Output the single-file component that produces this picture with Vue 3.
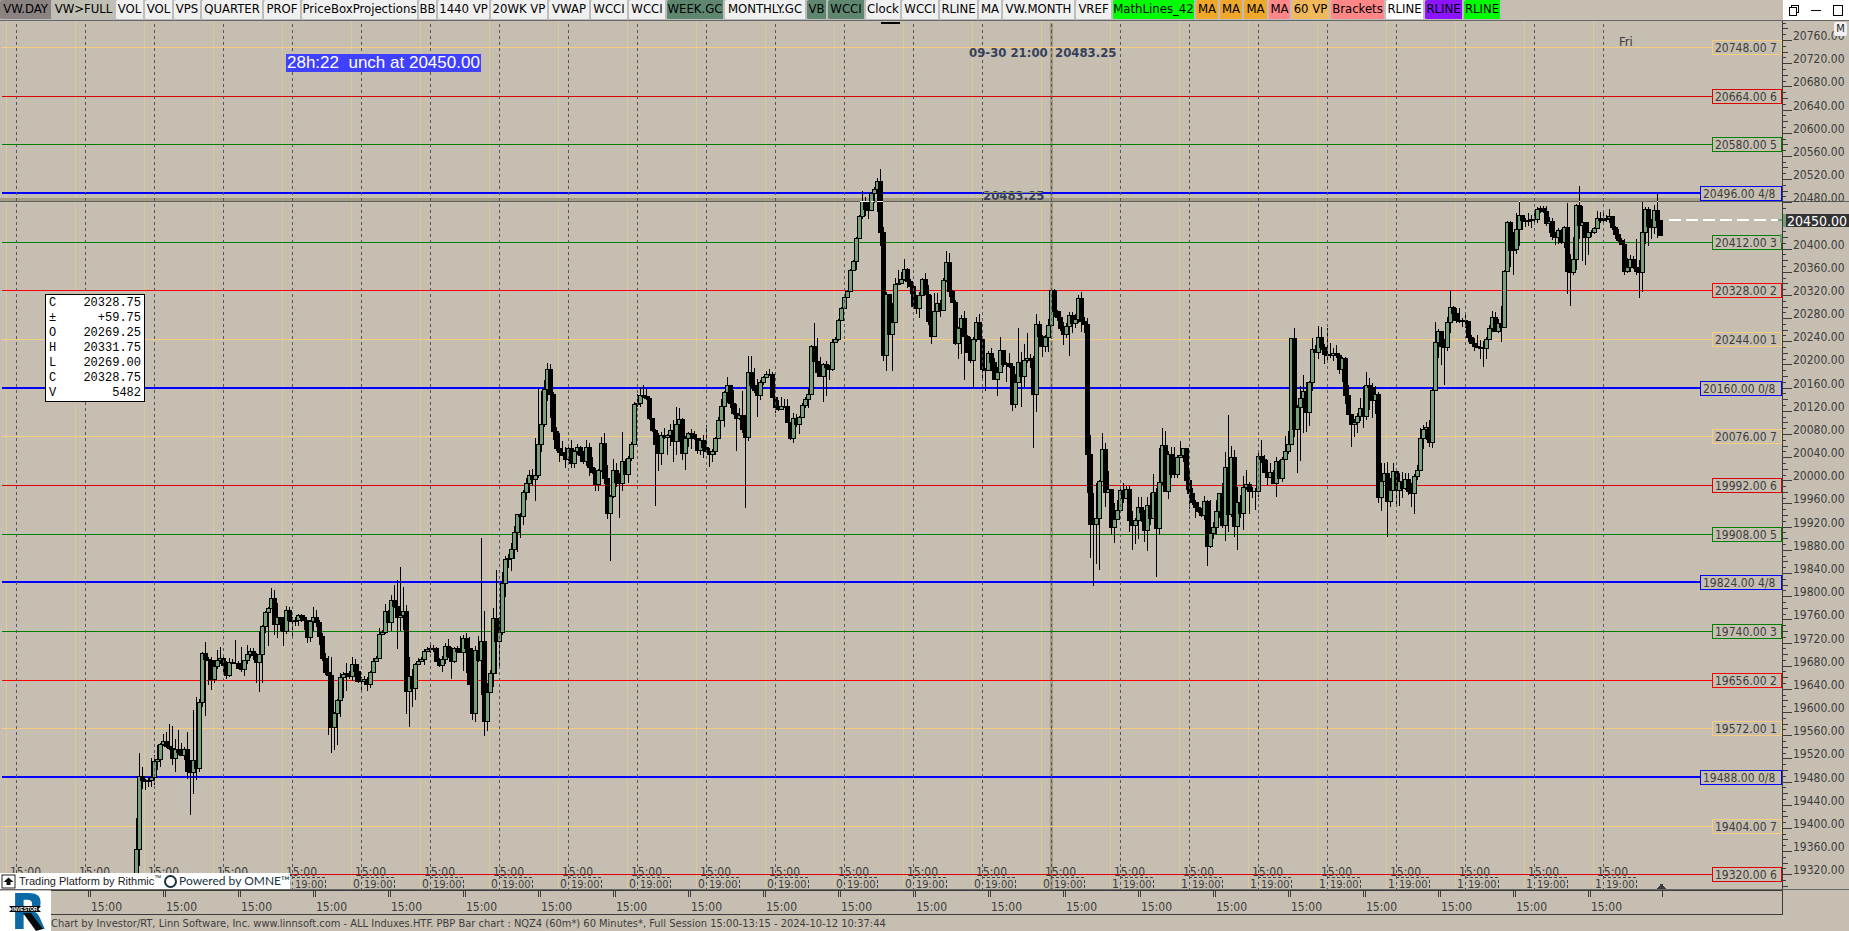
<template>
  <div class="workspace">
    <header class="toolbar">
      <nav class="tabs">
        <button
          v-for="(tab, index) in tabs"
          :key="index"
          class="tab"
          :class="tab[2]"
          :style="{ width: tab[1] + 'px' }">
          {{ tab[0] }}
        </button>
      </nav>
      <div class="window-controls">
        <button class="win-btn" aria-label="Restore">
          <svg width="12" height="12" viewBox="0 0 12 12"><path d="M3.5 3V1.5h7v7H9M1.5 3.5h7v8h-7z" /></svg>
        </button>
        <button class="win-btn" aria-label="Minimize">
          <svg width="12" height="12" viewBox="0 0 12 12"><path d="M1 6.500h10" /></svg>
        </button>
        <button class="win-btn" aria-label="Maximize">
          <svg width="12" height="12" viewBox="0 0 12 12"><path d="M1.500 1.500h9v10h-9z" /></svg>
        </button>
      </div>
    </header>

    <main class="chart">
      <svg class="plot" viewBox="0 21 1849 868">
        <!-- session grid -->
        <rect v-for="x in sessions" :key="'y' + x" class="day-line" :x="x - 10" y="21" width="1" height="868" />

        <!-- crosshair bands -->
        <rect class="cross-band" x="1050" y="23" width="3" height="866" />
        <rect class="cross-band" x="0" y="198" width="1782" height="3" />

        <!-- price levels -->
        <rect
          v-for="lv in levels"
          :key="'l' + lv.price"
          :fill="lv.color"
          x="2"
          :y="lv.thick ? lv.y - 1 : lv.y"
          width="1780"
          :height="lv.thick ? 2 : 1" />

        <!-- bars -->
        <g v-for="bar in bars" :key="bar.x">
          <rect :x="bar.x" :y="bar.high" width="1" :height="bar.low - bar.high" />
          <rect :x="bar.x - 2" :y="bar.top" width="5" :height="bar.size" />
          <rect v-if="bar.up && bar.size > 2" class="up" :x="bar.x - 1" :y="bar.top + 1" width="3" :height="bar.size - 2" />
        </g>

        <line v-for="x in sessions" :key="'d' + x" class="session" :x1="x + 0.5" y1="24" :x2="x + 0.5" y2="889" />
        <rect class="cross-line" x="0" y="201" width="1849" height="1" />
        <rect v-for="m in marks" :key="m[0]" fill="#fff" :x="m[0]" y="201" :width="m[1]" height="1" />
        <rect x="881" y="22" width="19" height="2" rx="1" />

        <!-- last price -->
        <line class="last-line" x1="1669" y1="220" x2="1778" y2="220" />
        <rect class="up" x="1778" y="219" width="4" height="2" />

        <!-- level labels -->
        <g v-for="lv in levels" :key="'b' + lv.price">
          <rect
            class="level-box"
            :stroke="lv.color"
            :x="lv.thick ? 1700.5 : 1712.5"
            :y="lv.y - 6.5"
            :width="lv.thick ? 81 : 69"
            height="14" />
          <text :x="lv.thick ? 1703 : 1715" :y="lv.y + 5">{{ lv.price }}.00 {{ lv.mark }}</text>
        </g>
        <rect class="up" x="1780" y="234" width="2" height="9" />

        <!-- session times -->
        <g v-for="(x, i) in sessions" :key="'t' + x">
          <text :x="x - 6" y="876">15:00</text>
          <text :x="x - 8" y="888">{{ i > 15 ? 1 : 0 }}</text>
          <text class="small" :x="x + 3" y="888">19:00</text>
          <path class="time-box" :d="`M${x} 877.5h33v11`" />
        </g>
        <path d="M1657 889v-1l3-2v-2h3v2l3 2v1z" fill="#3c3c3c" />

        <!-- price axis -->
        <rect class="ink" x="1782" y="21" width="1" height="868" />
        <rect v-for="t in ticks" :key="'k' + t.price" class="ink" x="1783" :y="t.y" :width="t.len" height="1" />
        <text v-for="t in axisLabels" :key="'a' + t.price" x="1793" :y="t.y">{{ t.price }}.00</text>
        <rect class="up" x="1783" y="214" width="3" height="13" />
        <rect fill="#333" x="1786" y="214" width="63" height="13" />
        <text class="last-price" x="1787" y="226">20450.00</text>

        <text class="cursor-text" x="969" y="57">09-30 21:00</text>
        <text class="cursor-text" x="1055" y="57">20483.25</text>
        <text class="cursor-text" x="983" y="200">20483.25</text>
        <rect fill="#ff0" fill-opacity="0.5" x="984" y="192" width="58" height="1" />
        <text class="day-name" x="1619" y="46">Fri</text>
      </svg>

      <div class="countdown">28h:22&nbsp; unch at 20450.00</div>

      <table class="quote">
        <tbody>
          <tr v-for="(row, index) in quote" :key="index">
            <th scope="row">{{ row[0] }}</th>
            <td>{{ row[1] }}</td>
          </tr>
        </tbody>
      </table>

      <button class="mode-btn">M</button>

      <div class="credits">
        <svg width="16" height="15" viewBox="0 0 16 15">
          <rect x="1" y="1" width="13" height="13" fill="#fff" stroke="#222" />
          <path d="M7.500 3.500l5 4.500h-3v3h-4V8h-3z" fill="#111" />
        </svg>
        <span class="rithmic">Trading Platform by Rithmic<sup>™</sup></span>
        <svg width="15" height="15" viewBox="0 0 15 15">
          <circle cx="7.500" cy="7.500" r="5.500" fill="none" stroke="#17313d" stroke-width="2" />
        </svg>
        <span class="omne">Powered by OMNE™</span>
      </div>
    </main>

    <footer class="bottom">
      <svg class="logo" viewBox="0 0 51 40">
        <text x="11" y="38">R</text>
        <path d="M23 22h8l12 16-7 2z" fill="#0a0a0a" />
        <path d="M9 15h32l-3 3 3 3H9l3-3z" fill="#000" />
        <text class="logo-band" x="12" y="20">INVESTOR</text>
      </svg>
      <div class="time-axis">
        <span v-for="n in 21" :key="n" class="time-cell">15:00</span>
        <i class="end-tick"></i>
      </div>
      <p class="caption">
        Chart by Investor/RT, Linn Software, Inc. www.linnsoft.com - ALL Induxes.HTF. PBP Bar chart : NQZ4 (60m*) 60 Minutes*, Full Session 15:00-13:15 - 2024-10-12 10:37:44
      </p>
    </footer>
  </div>
</template>

<script setup>
// label, width, colour class
const tabs = [
  ['VW.DAY', 53, 'dim'], ['VW>FULL', 63, 'soft'], ['VOL', 29, ''], ['VOL', 29, ''], ['VPS', 28, ''],
  ['QUARTER', 62, ''], ['PROF', 38, ''], ['PriceBoxProjections', 117, ''], ['BB', 19, ''],
  ['1440 VP', 53, ''], ['20WK VP', 58, ''], ['VWAP', 42, ''], ['WCCI', 38, ''], ['WCCI', 38, ''],
  ['WEEK.GC', 58, 'teal'], ['MONTHLY.GC', 82, ''], ['VB', 21, 'teal'], ['WCCI', 38, 'teal'],
  ['Clock', 36, ''], ['WCCI', 38, ''], ['RLINE', 39, ''], ['MA', 24, ''], ['VW.MONTH', 73, ''],
  ['VREF', 37, ''], ['MathLines_42', 83, 'lime'], ['MA', 24, 'orange'], ['MA', 24, 'orange'],
  ['MA', 25, 'orange'], ['MA', 23, 'pink'], ['60 VP', 39, 'amber'], ['Brackets', 55, 'pink'],
  ['RLINE', 39, 'white'], ['RLINE', 39, 'violet'], ['RLINE', 38, 'lime'],
]

const quote = [
  ['C', '20328.75'],
  ['±', '+59.75'],
  ['O', '20269.25'],
  ['H', '20331.75'],
  ['L', '20269.00'],
  ['C', '20328.75'],
  ['V', '5482'],
]

const sessions = Array.from({ length: 24 }, (_, i) => 16 + i * 69)

const priceY = (price) => Math.floor(47.5 + (20748 - price) * 0.5793)

const palette = {
  '7': '#f5cd82', '6': '#dc0000', '5': '#008000', '4/8': '#0000ff',
  '3': '#008000', '2': '#ff0000', '1': '#f5cd82', '0/8': '#0000ff',
}
const names = ['7', '6', '5', '4/8', '3', '2', '1', '0/8']
const levels = Array.from({ length: 18 }, (_, i) => {
  const price = 20748 - i * 84
  const mark = names[i % 8]
  return { price, mark, y: priceY(price), color: palette[mark], thick: mark.length > 1 }
})

const ticks = []
for (let price = 20790; price >= 19300; price -= 10) {
  ticks.push({ price, y: priceY(price), len: price % 40 === 0 ? 9 : price % 20 === 0 ? 5 : 3 })
}
const axisLabels = ticks.filter((t) => t.len === 9).map((t) => ({ price: t.price, y: t.y }))

// white pixels where the cursor line crosses a bar
const marks = [[860, 9], [871, 3], [877, 6], [1519, 1], [1579, 1], [1657, 1]]

// high, close, low of every bar; a bar opens at the previous close
const series = `
818 849 889 753 776 866 767 780 789 779 781 790 777 780 787 758 777 787
755 761 785 745 759 770 743 744 767 734 741 746 732 746 748 724 748 750 726 758 765 739 749 772
730 752 755 743 755 756 747 749 760 732 771 779 760 772 815 710 760 794 697 768 780 699 702 772
652 653 707 642 659 716 657 660 685 657 679 690 660 666 683 650 660 669 647 658 664
656 665 673 661 675 679 658 662 677 659 663 664 640 663 664 661 668 669 647 669 672 660 660 676
645 654 664 648 651 658 648 655 660 653 662 683 631 654 692 625 626 683 611 612 633 607 608 646
588 598 608 590 624 635 603 617 638 617 624 631 617 631 646 606 610 634 607 620 622
617 621 637 617 620 626 614 615 626 614 617 622 615 620 630 624 637 643 620 621 642 607 617 631
610 622 627 620 636 645 633 658 661 653 672 675 656 675 735 657 727 753 712 713 750 699 700 745
673 677 717 672 674 698 663 673 691 671 676 679 657 664 681 659 671 682 664 681 683
677 681 690 676 679 685 677 684 691 671 672 688 658 661 673 656 658 661 628 634 658 630 632 635
604 611 634 610 622 623 595 600 631 585 606 608 580 617 649 567 615 631 587 611 630 605 691 714
657 676 727 669 688 707 663 664 700 658 661 664 657 659 662 649 651 665 647 649 652
645 648 653 645 648 652 647 661 662 658 665 667 656 659 672 643 646 664 639 656 658 647 661 679
647 648 663 646 651 653 636 652 653 635 638 671 633 648 673 637 684 685 648 713 720 646 650 722
636 660 662 538 641 695 611 721 736 683 692 731 670 673 691 608 618 687 570 641 674
617 632 667 572 583 635 556 559 597 554 558 568 543 549 571 526 532 559 514 514 552 513 516 538
490 492 525 478 483 500 470 475 493 469 479 486 438 475 501 389 444 478 391 424 452 380 389 427
363 369 401 364 394 418 392 431 440 427 448 451 433 452 462 441 455 456 447 459 468
447 448 461 440 463 468 450 451 468 444 447 455 446 455 462 451 461 464 440 447 466 443 467 476
457 472 474 468 484 491 469 470 491 437 443 472 433 478 484 465 513 519 495 496 561 459 470 498
463 482 487 473 483 518 432 461 491 459 474 475 456 458 483 442 444 461 402 404 444 394 403 407
387 395 407 385 396 398 389 398 400 396 418 420 418 430 432 429 444 506 433 453 471
432 435 465 428 437 439 434 435 455 424 430 446 420 441 462 407 424 455 408 419 442 418 453 460
436 438 470 432 433 447 429 434 449 431 438 440 440 450 454 438 440 455 435 447 458 425 451 453
448 454 467 449 451 462 437 438 455 417 420 437 399 406 420 391 392 427 377 385 403
385 403 408 390 413 415 404 418 451 408 415 420 391 429 433 415 437 508 356 372 441 356 385 388
368 390 393 379 395 417 380 382 400 376 377 385 371 374 378 369 374 376 372 397 398 397 407 413
400 409 411 397 406 410 399 406 408 399 422 423 422 438 440 413 418 443 414 424 427
416 417 434 403 405 418 397 399 408 389 394 408 345 346 394 323 361 362 338 372 377 357 376 377
363 364 402 361 367 396 365 369 380 339 342 371 337 339 342 319 320 341 307 308 321 297 297 309
290 291 297 269 270 292 260 261 270 237 238 270 215 216 239 191 201 219 197 209 216
202 210 219 192 193 209 187 189 203 178 181 212 169 232 246 227 355 361 292 294 371 294 334 335
303 322 371 278 284 322 270 283 285 272 279 284 259 269 281 268 281 288 279 286 294 282 306 307
295 308 314 292 295 318 278 279 295 273 294 295 285 321 325 295 336 344 293 311 337
293 303 311 300 310 317 278 280 311 251 262 282 253 291 297 290 302 303 300 343 345 327 328 359
315 318 354 311 336 380 335 352 353 337 360 363 337 339 388 317 322 342 314 339 340 337 369 378
368 370 391 351 353 371 348 362 371 358 379 380 367 372 396 337 350 373 350 364 367
362 363 382 353 366 368 363 404 411 374 382 408 328 362 382 352 376 407 344 360 387 333 358 363
354 360 368 356 394 448 314 324 412 321 336 347 335 346 357 335 337 352 319 325 352 289 290 324
289 311 317 310 317 321 311 328 331 322 334 345 323 326 338 312 315 356 312 323 333
314 319 328 295 298 323 292 321 332 317 324 333 318 454 493 435 524 558 493 524 586 483 518 564
480 481 570 433 449 481 443 492 507 471 489 493 493 527 535 503 519 543 500 510 519 488 490 509
483 498 503 486 489 499 486 520 532 511 525 550 518 520 544 497 507 539 497 512 522
510 530 542 497 505 551 493 518 525 474 492 519 488 528 577 448 482 535 428 445 485 431 491 492
451 454 499 447 474 478 447 474 478 455 457 478 441 455 457 448 448 462 448 480 490 469 493 509
488 502 505 500 507 518 502 511 513 508 515 517 496 501 520 500 546 566 500 533 548
522 527 539 500 511 535 493 493 518 483 525 528 452 467 541 415 514 532 446 457 517 450 526 537
487 502 550 495 513 518 476 487 530 470 484 490 482 491 514 487 491 498 488 491 510 453 456 497
440 459 463 455 472 473 460 477 485 463 472 478 470 483 484 457 461 497 460 478 479
457 459 482 436 451 459 431 444 454 338 338 444 328 429 437 405 407 473 386 398 461 375 391 433
382 412 432 381 382 426 338 349 391 345 352 353 326 337 359 327 347 350 344 354 364 328 355 360
343 355 358 348 353 361 345 355 358 353 369 374 357 358 382 357 395 404 385 414 415
415 424 447 419 422 437 413 416 433 398 408 421 386 416 428 372 385 420 378 387 410 383 400 418
386 394 414 392 497 503 463 481 511 463 473 481 462 501 537 478 490 507 463 471 491 471 490 505
473 481 506 472 488 498 473 479 490 473 491 495 483 493 507 474 476 514 465 470 480
428 438 470 425 429 449 422 427 440 420 442 447 389 390 448 322 342 390 329 331 358 331 346 365
339 347 385 317 322 351 290 307 333 306 313 321 308 320 323 308 321 323 318 320 327 313 321 328
322 337 342 335 343 344 338 346 351 335 347 348 340 348 359 341 348 367 337 339 359
325 328 339 311 317 332 312 331 332 319 323 333 306 327 342 270 271 327 221 222 271 221 250 267
232 249 275 213 229 254 201 215 246 215 220 230 218 221 227 213 220 226 215 219 228 213 219 223
207 209 223 206 208 213 206 211 213 206 223 226 217 221 233 218 236 240 232 237 245
228 230 244 229 242 244 226 227 248 203 271 294 254 272 306 237 259 275 204 205 270 186 225 239
206 222 261 222 237 265 222 232 255 230 232 237 227 228 234 211 218 229 212 220 223 213 219 222
215 218 222 209 216 223 216 227 230 226 234 239 229 240 242 238 244 245 239 271 275
258 267 273 255 259 272 256 267 269 239 271 275 260 272 298 202 232 292 207 209 244 207 226 246
219 227 239 205 210 234 194 220 238 220 235 236
`.trim().split(/\s+/).map(Number)

const bars = []
let open = 889
for (let i = 0; i < series.length; i += 3) {
  const [high, close, low] = series.slice(i, i + 3)
  bars.push({
    x: 136 + i,
    high,
    low,
    top: Math.min(open, close),
    size: Math.abs(close - open) + 1,
    up: close < open,
  })
  open = close
}
</script>

<style>
body { margin: 0; background: #c6bfb1; }
</style>

<style scoped>
.workspace { color: #3c3c3c; background: #c6bfb1; font-family: "DejaVu Sans Condensed", "DejaVu Sans", sans-serif; font-size: 12px; }
button { font-family: inherit; padding: 0; border: 0; }

.toolbar { display: flex; justify-content: space-between; height: 20px; border-bottom: 1px solid #666; }
.tabs { display: flex; }
.tab { display: flex; justify-content: center; box-sizing: border-box; flex: none; height: 20px; border-right: 2px solid #bdbdbd; border-bottom: 1px solid #bdbdbd; border-radius: 2px; background: #f0f0f0; color: #000; font-size: 13px; line-height: 18px; white-space: nowrap; }
.dim { background: #8a8382; }
.soft { background: #bfbfb3; }
.teal { background: #5f8770; }
.lime { background: #00ff00; }
.orange { background: #f0a82a; }
.pink { background: #ff8787; }
.amber { background: #f2b95c; }
.white { background: #fff; }
.violet { background: #8c14ff; }
.window-controls { display: flex; justify-content: space-around; align-items: center; width: 66px; background: #fff; }
.win-btn { display: flex; width: 12px; height: 12px; background: none; }
.win-btn path { fill: none; stroke: #000; shape-rendering: crispEdges; }

.chart { position: relative; }
.plot { display: block; width: 100%; height: auto; shape-rendering: crispEdges; }
.plot text { font-size: 12px; fill: #3c3c3c; }
.plot .small { font-size: 11px; }
.plot .last-price { font-size: 14px; fill: #fff; }
.plot .cursor-text { font-size: 13px; font-weight: bold; fill: #35405a; }
.plot .day-name { font-size: 13px; }
.day-line { fill: #d8c998; }
.session { stroke: #555; stroke-dasharray: 3 3; }
.cross-band { fill: #a59c84; }
.cross-line { fill: #606060; }
.up { fill: #76a076; }
.last-line { stroke: #fff; stroke-width: 2; stroke-dasharray: 12 5; }
.level-box { fill: #c6bfb1; }
.time-box { fill: none; stroke: #444; stroke-dasharray: 3 2; }
.ink { fill: #3c3c3c; }

.countdown { position: absolute; left: 286px; top: 33px; padding: 0 1px; background: #4040ff; color: #fff; font: 17px/18px "Liberation Sans", Arial, sans-serif; white-space: nowrap; }
.quote { position: absolute; left: 45px; top: 273px; box-sizing: border-box; width: 100px; padding-top: 1px; border: 1px solid #000; border-spacing: 0; background: #fff; color: #000; font: 12px/15px "Liberation Mono", "Courier New", monospace; }
.quote th, .quote td { padding: 0 3px; font-weight: normal; text-align: left; }
.quote td { text-align: right; }
.mode-btn { position: absolute; right: 2px; top: 1px; width: 13px; height: 14px; border-radius: 2px; background: #f0f0f0; color: #222; font-size: 11px; line-height: 14px; }
.credits { position: absolute; left: 0; bottom: 0; display: flex; align-items: center; box-sizing: border-box; width: 290px; height: 16px; padding-left: 1px; background: #fff; white-space: nowrap; }
.credits svg { flex: none; }
.rithmic { flex: 1; margin-left: 2px; color: #222; font: 11px/16px "Liberation Sans", Arial, sans-serif; }
.rithmic sup { font-size: 7px; line-height: 0; }
.omne { margin-left: 1px; color: #17313d; font: 12px/16px Lato, sans-serif; }

.bottom { display: grid; grid-template-columns: 51px minmax(0, 1fr); border-top: 1px solid #666; }
.logo { grid-row: 1 / 3; width: 51px; height: 40px; margin-top: 1px; background: #fff; }
.logo text { font: bold 50px "Liberation Sans Narrow", "DejaVu Sans Condensed", sans-serif; fill: #0b69a5; }
.logo .logo-band { font: bold 5px "Liberation Sans", sans-serif; fill: #fff; }
.time-axis { display: flex; height: 23px; margin-right: 66px; padding-left: 37px; border: 1px solid #3c3c3c; border-left: 0; }
.time-cell { position: relative; box-sizing: border-box; flex: none; width: 75px; padding-left: 3px; line-height: 33px; }
.time-cell::before { content: ""; position: absolute; left: 0; top: 0; width: 1px; height: 6px; border: solid #3c3c3c; border-width: 0 1px; }
.time-cell:nth-last-child(2) { width: 74px; }
.end-tick { width: 1px; height: 6px; background: #3c3c3c; }
.caption { margin: 0; font-size: 11px; line-height: 17px; height: 16px; white-space: nowrap; }
</style>
